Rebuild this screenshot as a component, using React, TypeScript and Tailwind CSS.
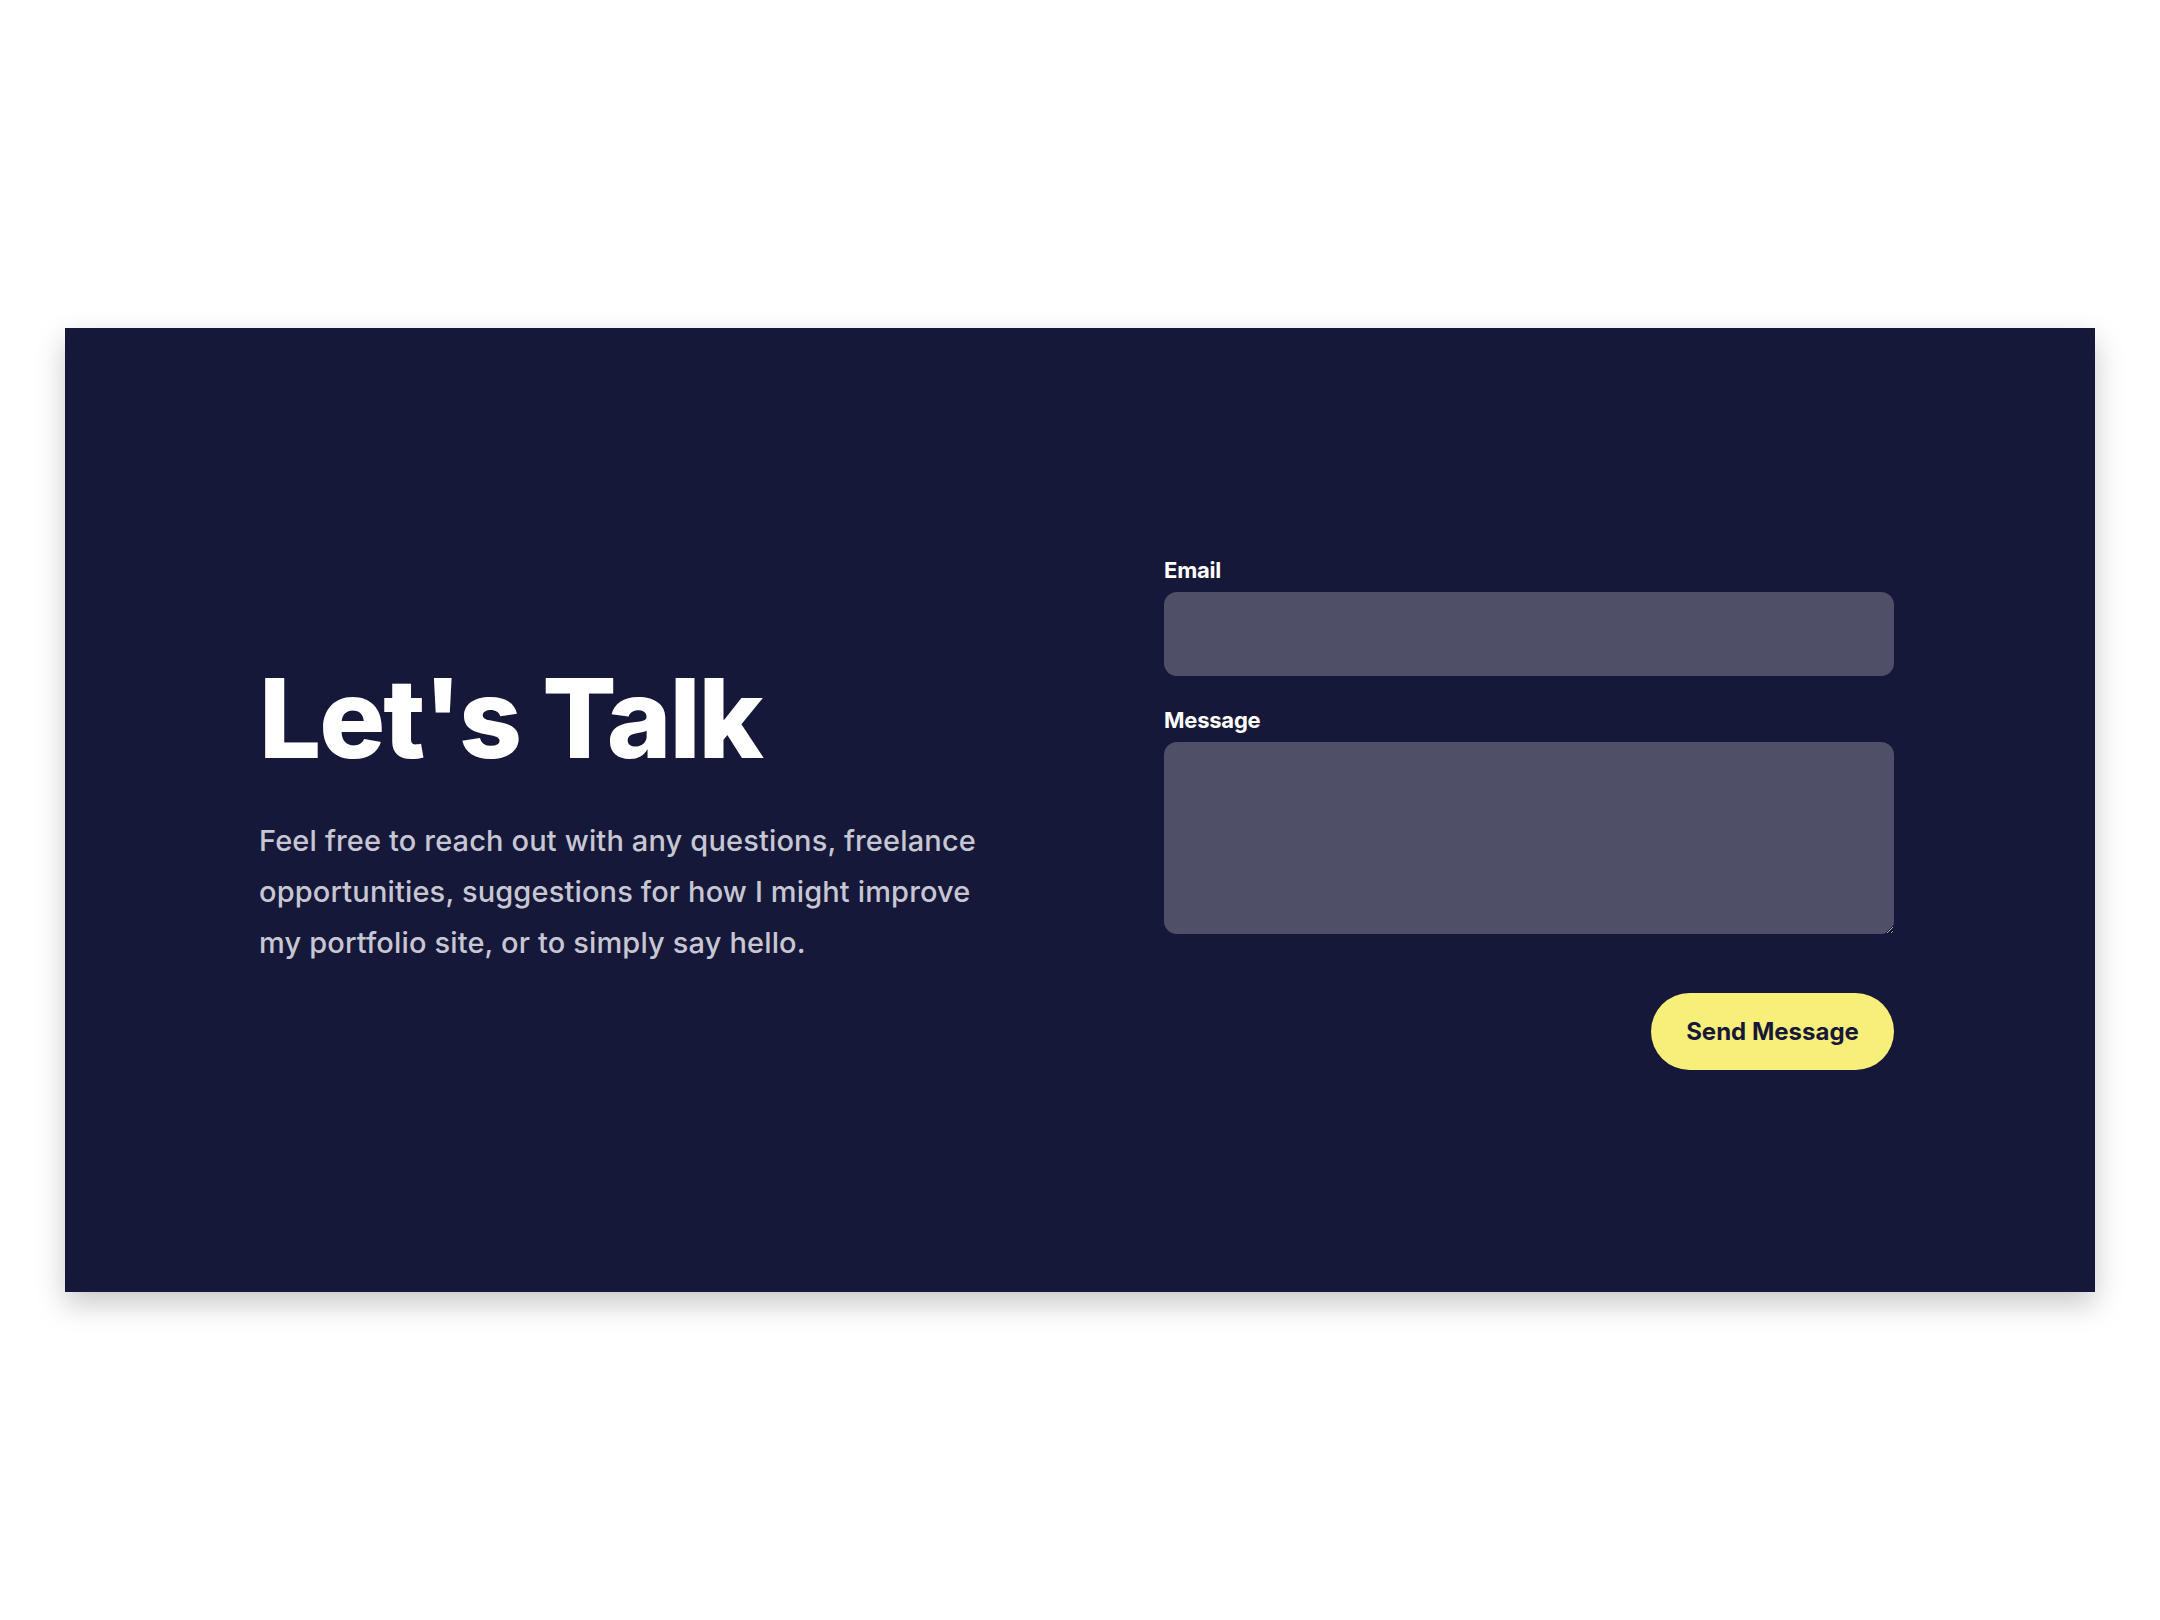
export default function App() {
  return (
    <div className="h-[1620px] bg-white flex items-center px-[65px]" style={{ fontFamily: 'Inter, "Noto Sans", sans-serif' }}>
      <section className="w-full h-[964px] bg-[#161839] shadow-[0_12px_28px_rgba(0,0,0,0.22)] flex items-center justify-between pl-[194px] pr-[201px]">
        {/* Intro */}
        <div className="w-[760px] pt-[10px]">
          <h1 className="text-[110px] leading-none font-extrabold text-white tracking-[-0.018em]">
            Let's Talk
          </h1>
          <p className="mt-[42px] text-[29px] leading-[51px] font-medium text-[#c6c7d3] tracking-[0.005em]">
            Feel free to reach out with any questions, freelance<br />
            opportunities, suggestions for how I might improve<br />
            my portfolio site, or to simply say hello.
          </p>
        </div>

        {/* Contact form */}
        <form className="w-[730px] pt-[6px] flex flex-col" onSubmit={(e) => e.preventDefault()}>
          <label htmlFor="email" className="text-[22px] leading-[28px] font-bold text-white tracking-[-0.01em]">
            Email
          </label>
          <input
            id="email"
            type="email"
            className="mt-2 h-[84px] rounded-[13px] bg-[#4f5067] px-5 text-[22px] text-white outline-none"
          />
          <label htmlFor="message" className="mt-[30px] text-[22px] leading-[28px] font-bold text-white tracking-[-0.01em]">
            Message
          </label>
          <textarea
            id="message"
            className="mt-2 h-[192px] rounded-[13px] bg-[#4f5067] px-5 py-4 text-[22px] text-white outline-none"
          />
          <div className="mt-[59px] flex justify-end">
            <button
              type="submit"
              className="h-[77px] w-[243px] rounded-full bg-[#f7ef79] text-[24px] font-bold text-[#161839]"
            >
              Send Message
            </button>
          </div>
        </form>
      </section>
    </div>
  )
}
